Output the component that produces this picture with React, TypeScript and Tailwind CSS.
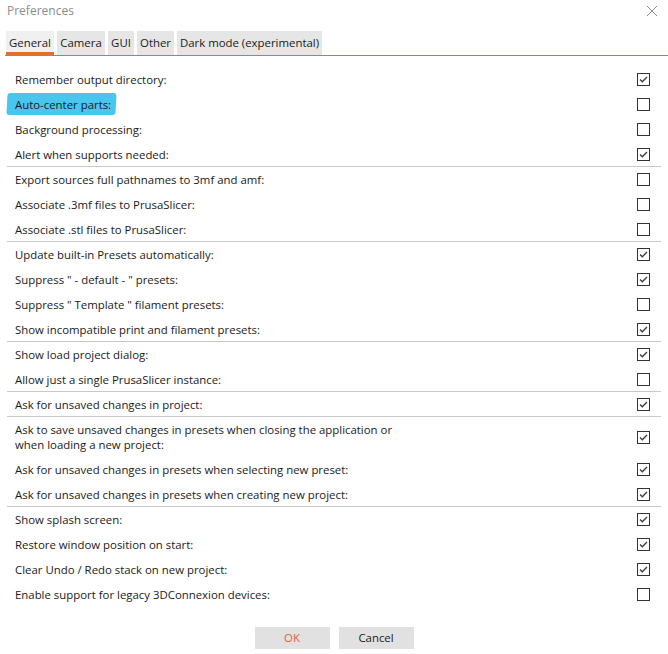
import React from "react";

type Row = {
  label: React.ReactNode;
  checked: boolean;
  sep?: boolean;
  tall?: boolean;
  mark?: boolean;
};

const rows: Row[] = [
  { label: "Remember output directory:", checked: true },
  { label: "Auto-center parts:", checked: false, mark: true },
  { label: "Background processing:", checked: false },
  { label: "Alert when supports needed:", checked: true, sep: true },
  { label: "Export sources full pathnames to 3mf and amf:", checked: false },
  { label: "Associate .3mf files to PrusaSlicer:", checked: false },
  { label: "Associate .stl files to PrusaSlicer:", checked: false, sep: true },
  { label: "Update built-in Presets automatically:", checked: true },
  { label: 'Suppress " - default - " presets:', checked: true },
  { label: 'Suppress " Template " filament presets:', checked: false },
  { label: "Show incompatible print and filament presets:", checked: true, sep: true },
  { label: "Show load project dialog:", checked: true },
  { label: "Allow just a single PrusaSlicer instance:", checked: false, sep: true },
  { label: "Ask for unsaved changes in project:", checked: true, sep: true },
  {
    label: (
      <>
        Ask to save unsaved changes in presets when closing the application or
        <br />
        when loading a new project:
      </>
    ),
    checked: true,
    tall: true,
  },
  { label: "Ask for unsaved changes in presets when selecting new preset:", checked: true },
  { label: "Ask for unsaved changes in presets when creating new project:", checked: true, sep: true },
  { label: "Show splash screen:", checked: true },
  { label: "Restore window position on start:", checked: true },
  { label: "Clear Undo / Redo stack on new project:", checked: true },
  { label: "Enable support for legacy 3DConnexion devices:", checked: false },
];

const tabs = [
  { name: "General", w: "w-[48px]" },
  { name: "Camera", w: "w-[48px]" },
  { name: "GUI", w: "w-[26px]" },
  { name: "Other", w: "w-[37px]" },
  { name: "Dark mode (experimental)", w: "w-[145px]" },
];

const CheckBox: React.FC<{ checked: boolean }> = ({ checked }) => (
  <div className="w-[13px] h-[13px] border border-[#333333] bg-white flex items-center justify-center">
    {checked && (
      <svg width="11" height="11" viewBox="0 0 11 11">
        <path d="M2 5.5 L4.3 7.8 L9 3" fill="none" stroke="#3a3a3a" strokeWidth="1.3" />
      </svg>
    )}
  </div>
);

export default function App() {
  return (
    <div
      className="w-[668px] h-[654px] bg-white text-[#1a1a1a] overflow-hidden"
      style={{ fontFamily: '"Open Sans", "Noto Sans", sans-serif' }}
    >
      <div className="h-[22px] pl-[7px] pr-[10px] flex items-center justify-between">
        <span className="text-[12px] text-[#8c8c8c]">Preferences</span>
        <svg width="12" height="12" viewBox="0 0 12 12">
          <path d="M1 1 L11 11 M11 1 L1 11" stroke="#8a8a8a" strokeWidth="1" />
        </svg>
      </div>

      <div className="mt-[9px] ml-[5px] border-b-[1.5px] border-[#e0702f]">
        <div className="flex gap-[3px] pl-[1px] h-[24px]">
          {tabs.map((t, i) => (
            <div
              key={t.name}
              className={`${t.w} flex items-center justify-center text-[11.4px] leading-none whitespace-nowrap ${
                i === 0
                  ? "bg-[#f0f0f0] border-b-[3px] border-[#e0702f] pt-[3px]"
                  : "bg-[#e6e6e6]"
              }`}
            >
              {t.name}
            </div>
          ))}
        </div>
      </div>

      <div className="mt-[11px] mx-[7px]">
        {rows.map((r, i) => (
          <div
            key={i}
            className={`flex items-center justify-between pl-[8px] pr-[11px] ${
              r.tall ? "h-[40px]" : "h-[25px]"
            } ${r.sep ? "border-b border-[#c8c8c8]" : ""}`}
          >
            <div className="text-[11.4px] leading-[15px] relative">
              {r.mark && (
                <div className="absolute -left-[8px] -top-[4px] w-[109px] h-[22px] bg-[#48c6ee] rounded-[3px] -skew-x-3" />
              )}
              <span className="relative">{r.label}</span>
            </div>
            <CheckBox checked={r.checked} />
          </div>
        ))}
      </div>

      <div className="mt-[20px] flex justify-center gap-[9px]">
        <button className="w-[75px] h-[22px] bg-[#e1e1e1] text-[11.4px] text-[#e0633a]">OK</button>
        <button className="w-[75px] h-[22px] bg-[#e1e1e1] text-[11.4px]">Cancel</button>
      </div>
    </div>
  );
}
